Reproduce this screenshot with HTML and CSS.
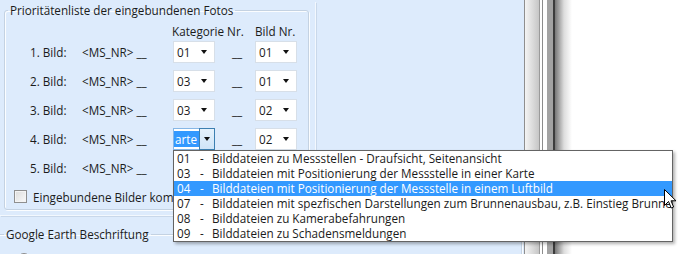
FILE: index.html
```html
<!DOCTYPE html>
<html lang="de">
<head>
<meta charset="utf-8">
<title>Prioritätenliste</title>
<link rel="stylesheet" href="styles.css">
</head>
<body>
<div class="screen">
  <div class="left-pane">
    <div class="top-panel">
      <fieldset class="group prio">
        <legend>Prioritätenliste der eingebundenen Fotos</legend>
        <div class="head-row">
          <span class="h-kat">Kategorie Nr.</span>
          <span class="h-bild">Bild Nr.</span>
        </div>
        <div class="rows">
          <span class="lbl">1. Bild:</span><span class="ms">&lt;MS_NR&gt; __</span>
          <div class="combo"><span class="val">01</span><span class="arrow"></span></div>
          <span class="sep">__</span>
          <div class="combo"><span class="val">01</span><span class="arrow"></span></div>

          <span class="lbl">2. Bild:</span><span class="ms">&lt;MS_NR&gt; __</span>
          <div class="combo"><span class="val">03</span><span class="arrow"></span></div>
          <span class="sep">__</span>
          <div class="combo"><span class="val">01</span><span class="arrow"></span></div>

          <span class="lbl">3. Bild:</span><span class="ms">&lt;MS_NR&gt; __</span>
          <div class="combo"><span class="val">03</span><span class="arrow"></span></div>
          <span class="sep">__</span>
          <div class="combo"><span class="val">02</span><span class="arrow"></span></div>

          <span class="lbl">4. Bild:</span><span class="ms">&lt;MS_NR&gt; __</span>
          <div class="combo active"><span class="val"><span class="sel">arte</span></span><span class="btn"><span class="arrow"></span></span></div>
          <span class="sep">__</span>
          <div class="combo"><span class="val">02</span><span class="arrow"></span></div>

          <span class="lbl">5. Bild:</span><span class="ms">&lt;MS_NR&gt; __</span>
          <div class="combo"><span class="val"></span><span class="arrow"></span></div>
          <span class="sep"></span>
          <div class="combo"><span class="val"></span><span class="arrow"></span></div>
        </div>
        <label class="check"><span class="box"></span><span class="check-text">Eingebundene Bilder komprimieren</span></label>
      </fieldset>
    </div>
    <fieldset class="group ge">
      <legend>Google Earth Beschriftung</legend>
      <span class="radio"></span>
    </fieldset>
  </div>
  <div class="splitter"></div>
  <div class="right-pane"></div>
</div>

<div class="dropdown">
  <div class="item"><span class="code">01</span><span class="dash">-</span><span class="txt">Bilddateien zu Messstellen - Draufsicht, Seitenansicht</span></div>
  <div class="item"><span class="code">03</span><span class="dash">-</span><span class="txt">Bilddateien mit Positionierung der Messstelle in einer Karte</span></div>
  <div class="item selected"><span class="code">04</span><span class="dash">-</span><span class="txt">Bilddateien mit Positionierung der Messstelle in einem Luftbild</span></div>
  <div class="item"><span class="code">07</span><span class="dash">-</span><span class="txt">Bilddateien mit spezfischen Darstellungen zum Brunnenausbau, z.B. Einstieg Brunnen</span></div>
  <div class="item"><span class="code">08</span><span class="dash">-</span><span class="txt">Bilddateien zu Kamerabefahrungen</span></div>
  <div class="item"><span class="code">09</span><span class="dash">-</span><span class="txt">Bilddateien zu Schadensmeldungen</span></div>
</div>

<svg class="cursor" width="13" height="21" viewBox="0 0 13 21">
  <path d="M0.5 0.5 L0.5 16.5 L4.5 12.5 L7.2 19 L9.6 18 L7 11.8 L12 11.8 Z" fill="#fff" stroke="#000" stroke-width="1" stroke-linejoin="miter"/>
</svg>
</body>
</html>
```

FILE: styles.css
```css
html, body {
  margin: 0;
  padding: 0;
}
body {
  width: 681px;
  height: 254px;
  overflow: hidden;
  position: relative;
  font-family: "Open Sans", "Noto Sans", sans-serif;
  font-size: 11.7px;
  color: #1b1b1b;
  background: #fff;
}
.screen {
  display: flex;
  height: 254px;
}
.left-pane {
  width: 524px;
  flex: none;
  background: #ddebfc;
  overflow: hidden;
}
.top-panel {
  width: 315px;
  height: 213px;
  border-right: 1px solid #f3f8fe;
  border-bottom: 1px solid #f3f8fe;
  box-shadow: 1px 1px 0 #c9d8ea;
  box-sizing: content-box;
}
.group {
  margin: 0;
  padding: 0;
  border: 1px solid #c4d2e2;
  border-radius: 3px;
  box-shadow: inset 1px 1px 0 #fbfdff, 1px 1px 0 #fbfdff;
}
.group legend {
  padding: 0 2px;
  margin-left: 3px;
  line-height: 16px;
  font-size: 11.7px;
}
.prio {
  margin: 2px 0 0 4px;
  width: 305px;
  height: 208px;
  box-sizing: border-box;
  padding-top: 3px;
}
.head-row {
  display: flex;
  height: 20px;
  line-height: 20px;
  padding-left: 167px;
}
.h-kat { width: 83px; }
.rows {
  display: grid;
  grid-template-columns: 52px 91px 42px 40px 42px;
  grid-auto-rows: 22px;
  row-gap: 7px;
  padding-left: 25px;
  align-items: center;
}
.lbl, .ms { line-height: 22px; white-space: nowrap; }
.sep {
  text-align: center;
  line-height: 22px;
  padding-left: 4px;
}
.combo {
  height: 22px;
  box-sizing: border-box;
  border: 1px solid #d7dfe8;
  background: #fff;
  display: flex;
  align-items: center;
  position: relative;
}
.combo .val {
  padding-left: 3px;
  flex: 1;
}
.arrow {
  width: 0;
  height: 0;
  border-left: 3.5px solid transparent;
  border-right: 3.5px solid transparent;
  border-top: 4px solid #111;
  margin-right: 7px;
}
.combo.active {
  border-color: #86b7e6;
}
.combo.active .val {
  padding-left: 0;
  display: flex;
  height: 100%;
  align-items: center;
}
.sel {
  background: #3399ff;
  color: #fff;
  display: block;
  width: 24px;
  height: 16px;
  line-height: 16px;
  overflow: hidden;
  padding-left: 1px;
}
.btn {
  width: 16px;
  height: 22px;
  margin: -1px -1px -1px 0;
  box-sizing: border-box;
  border: 1px solid #3c7fb1;
  background: linear-gradient(#e6f2fc, #cfe4f7);
  display: flex;
  align-items: center;
  justify-content: center;
}
.btn .arrow { margin-right: 0; }
.check {
  display: flex;
  align-items: center;
  margin: 11px 0 0 9px;
  height: 13px;
  line-height: 13px;
  white-space: nowrap;
}
.check .box {
  width: 13px;
  height: 13px;
  box-sizing: border-box;
  border: 1px solid #8f8f8f;
  background: linear-gradient(135deg, #dcdcdc, #fafafa);
  box-shadow: inset 0 0 0 1px #f4f4f4;
  margin-right: 6px;
  flex: none;
}
.check-text {
  width: 140px;
  overflow: hidden;
  height: 16px;
  line-height: 16px;
}
.ge {
  margin: 10px 0 0 -4px;
  width: 526px;
  height: 60px;
  box-sizing: border-box;
}
.ge legend {
  margin-left: 7px;
}
.radio {
  display: block;
  width: 12px;
  height: 12px;
  border: 1px solid #8a8a8a;
  border-radius: 50%;
  background: #f5f5f5;
  margin: 11px 0 0 20px;
}
.splitter {
  width: 48px;
  flex: none;
  background: linear-gradient(to right,
    #8e8e8e 0 1px,
    #f4f4f4 1px, #c6c6c6 15px,
    #9a9a9a 15px 16px,
    #ffffff 16px 18px,
    #8c8c8c 18px 19px,
    #ffffff 19px 23px,
    #a3a3a3 23px 29px,
    #3c3c3c 29px 31px,
    #777777 31px, #dddddd 40px, #ffffff 48px);
}
.right-pane {
  flex: 1;
  background: #fff;
}
.dropdown {
  position: absolute;
  left: 173px;
  top: 150px;
  width: 500px;
  height: 92px;
  box-sizing: border-box;
  border: 1px solid #646464;
  background: #fff;
  box-shadow: 2px 2px 3px rgba(0,0,0,0.3);
  overflow: hidden;
}
.item {
  display: flex;
  height: 15px;
  line-height: 15px;
  white-space: nowrap;
  padding-left: 3px;
}
.item .code { width: 23px; flex: none; }
.item .dash { width: 12px; flex: none; }
.item.selected {
  background: #3399ff;
  color: #fff;
}
.cursor {
  position: absolute;
  left: 664px;
  top: 189px;
}
```
